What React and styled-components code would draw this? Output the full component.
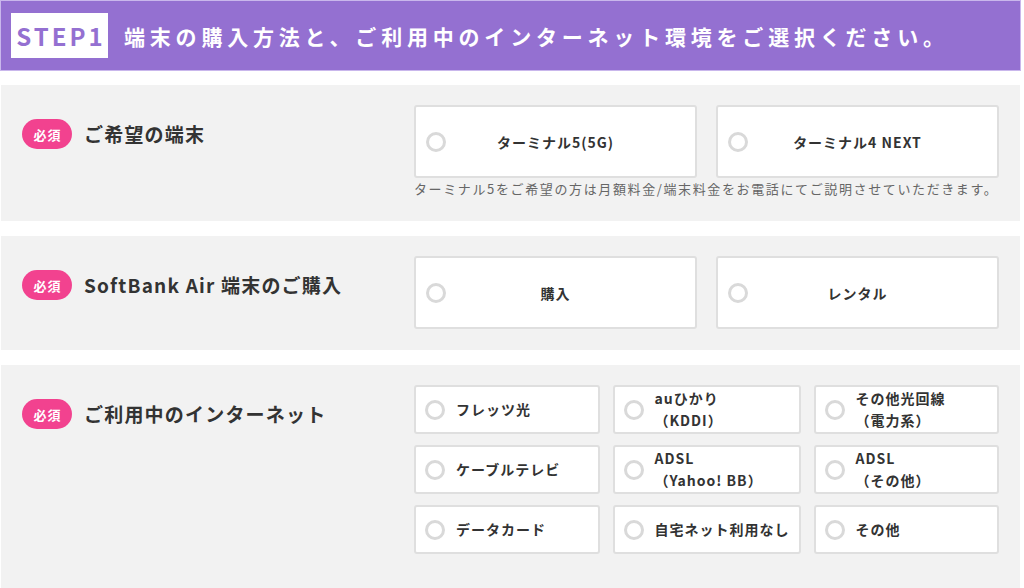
import React from 'react';
import styled, { createGlobalStyle } from 'styled-components';

const Global = createGlobalStyle`
  html, body { margin: 0; padding: 0; background: #fff; }
  body {
    font-family: "Noto Sans CJK JP", "Noto Sans", sans-serif;
    color: #333;
  }
`;

const Page = styled.div`
  width: 1021px;
  display: flex;
  flex-direction: column;
`;

const Header = styled.header`
  height: 71px;
  box-sizing: border-box;
  border: 1px solid #c9b7ec;
  background: #9470d1;
  display: flex;
  align-items: center;
  gap: 16px;
  padding-left: 10px;
`;

const StepBox = styled.div`
  width: 97px;
  height: 45px;
  background: #fff;
  color: #9470d1;
  display: flex;
  align-items: center;
  justify-content: center;
  font-size: 24px;
  font-weight: 700;
  letter-spacing: 3px;
  padding-left: 3px;
  box-sizing: border-box;
`;

const Title = styled.h1`
  margin: 0;
  color: #fff;
  font-size: 21px;
  font-weight: 700;
  letter-spacing: 4.8px;
  white-space: nowrap;
`;

const Section = styled.section`
  background: #f2f2f2;
  margin: ${p => p.$top}px 1px 0 1px;
  padding: 20px 21px ${p => p.$bottom}px 21px;
  display: flex;
`;

const LabelCol = styled.div`
  width: 392px;
  flex-shrink: 0;
  display: flex;
  align-items: flex-start;
  gap: 12px;
  padding-top: 14px;
  box-sizing: border-box;
`;

const Badge = styled.span`
  width: 50px;
  height: 30px;
  border-radius: 15px;
  background: #f2428f;
  color: #fff;
  font-size: 13px;
  font-weight: 700;
  letter-spacing: 1px;
  padding-left: 1px;
  box-sizing: border-box;
  display: flex;
  align-items: center;
  justify-content: center;
  flex-shrink: 0;
`;

const Label = styled.span`
  font-size: 19px;
  font-weight: 700;
  letter-spacing: 1.2px;
  line-height: 30px;
  color: #333;
  white-space: nowrap;
`;

const OptionsCol = styled.div`
  flex: 1;
  display: flex;
  flex-direction: column;
`;

const Grid = styled.div`
  display: grid;
  grid-template-columns: repeat(${p => p.$cols}, 1fr);
  column-gap: ${p => p.$colGap}px;
  row-gap: 11px;
`;

const Option = styled.label`
  height: ${p => p.$h}px;
  box-sizing: border-box;
  background: #fff;
  border: 2px solid #dfdfdf;
  border-radius: 3px;
  display: grid;
  grid-template-columns: ${p => (p.$center ? '20px 1fr 20px' : '20px 1fr')};
  align-items: center;
  column-gap: 11px;
  padding: 0 ${p => (p.$center ? 10 : 9)}px;
  cursor: pointer;
`;

const Radio = styled.span`
  width: 20px;
  height: 20px;
  box-sizing: border-box;
  border-radius: 50%;
  border: 3.5px solid #d9d9d9;
  background: #fff;
`;

const OptionText = styled.span`
  font-size: 14px;
  font-weight: 700;
  letter-spacing: 1px;
  line-height: 22px;
  color: #333;
  text-align: ${p => (p.$center ? 'center' : 'left')};
  white-space: nowrap;
  margin-top: ${p => (p.$center ? 0 : -2)}px;
`;

const Note = styled.p`
  margin: 2px 0 0 0;
  font-size: 13px;
  line-height: 18px;
  letter-spacing: 1.62px;
  color: #666;
  white-space: nowrap;
`;

const internet = [
  ['フレッツ光'],
  ['auひかり', '（KDDI）'],
  ['その他光回線', '（電力系）'],
  ['ケーブルテレビ'],
  ['ADSL', '（Yahoo! BB）'],
  ['ADSL', '（その他）'],
  ['データカード'],
  ['自宅ネット利用なし'],
  ['その他'],
];

function CenterOption({ text }) {
  return (
    <Option $h={73} $center>
      <Radio />
      <OptionText $center>{text}</OptionText>
      <span />
    </Option>
  );
}

export default function App() {
  return (
    <>
      <Global />
      <Page>
        <Header>
          <StepBox>STEP1</StepBox>
          <Title>端末の購入方法と、ご利用中のインターネット環境をご選択ください。</Title>
        </Header>

        <Section $top={14} $bottom={23}>
          <LabelCol>
            <Badge>必須</Badge>
            <Label>ご希望の端末</Label>
          </LabelCol>
          <OptionsCol>
            <Grid $cols={2} $colGap={19}>
              <CenterOption text="ターミナル5(5G)" />
              <CenterOption text="ターミナル4 NEXT" />
            </Grid>
            <Note>ターミナル5をご希望の方は月額料金/端末料金をお電話にてご説明させていただきます。</Note>
          </OptionsCol>
        </Section>

        <Section $top={15} $bottom={21}>
          <LabelCol>
            <Badge>必須</Badge>
            <Label>SoftBank Air 端末のご購入</Label>
          </LabelCol>
          <OptionsCol>
            <Grid $cols={2} $colGap={19}>
              <CenterOption text="購入" />
              <CenterOption text="レンタル" />
            </Grid>
          </OptionsCol>
        </Section>

        <Section $top={15} $bottom={34}>
          <LabelCol>
            <Badge>必須</Badge>
            <Label>ご利用中のインターネット</Label>
          </LabelCol>
          <OptionsCol>
            <Grid $cols={3} $colGap={13}>
              {internet.map((lines, i) => (
                <Option key={i} $h={49}>
                  <Radio />
                  <OptionText>
                    {lines.map((l, j) => (
                      <React.Fragment key={j}>
                        {j > 0 && <br />}
                        {l}
                      </React.Fragment>
                    ))}
                  </OptionText>
                </Option>
              ))}
            </Grid>
          </OptionsCol>
        </Section>
      </Page>
    </>
  );
}
